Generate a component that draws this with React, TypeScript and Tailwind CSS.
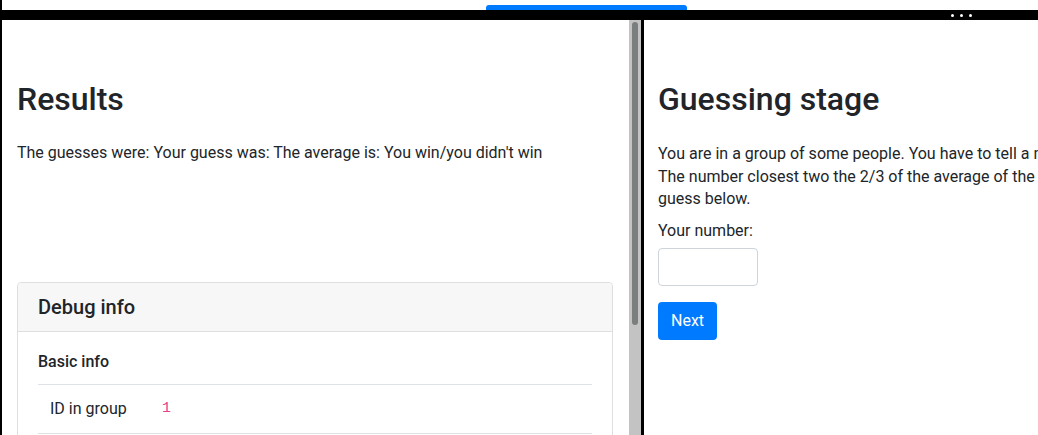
import React from 'react';

const font = "font-['Roboto','Liberation_Sans',sans-serif]";

const ResultsFrame: React.FC = () => (
    <div className="flex-1 flex min-w-0 border-l-2 border-black">
        <div className="flex-1 min-w-0 px-[15px] pt-[60px] overflow-hidden">
            <h1 className="text-[32px] leading-[38px] font-medium text-[#212529] mb-[24px]">Results</h1>
            <p className="text-[16px] leading-[22px] text-[#212529]">
                The guesses were: Your guess was: The average is: You win/you didn't win
            </p>

            {/* Debug card */}
            <div className="mt-[118px] border border-[#dfdfdf] rounded-[4px] w-[596px]">
                <div className="bg-[#f7f7f7] border-b border-[#dfdfdf] px-5 py-3 rounded-t-[4px]">
                    <h4 className="text-[20px] leading-[24px] font-medium text-[#212529]">Debug info</h4>
                </div>
                <div className="px-5 pt-5 pb-8">
                    <h5 className="text-[16px] leading-[20px] font-medium text-[#212529] mb-3">Basic info</h5>
                    <table className="w-full border-t border-[#dee2e6]">
                        <tbody>
                            <tr className="border-b border-[#dee2e6]">
                                <td className="px-3 py-3 text-[16px] leading-[24px] text-[#212529] w-[124px]">ID in group</td>
                                <td className="py-3 text-[15px] leading-[24px] text-[#e83e8c] font-['Liberation_Mono',monospace]">1</td>
                            </tr>
                        </tbody>
                    </table>
                </div>
            </div>
        </div>

        {/* Scrollbar */}
        <div className="w-[12px] bg-[#c3c3c3] flex justify-center pt-[2px]">
            <div className="w-[6px] h-[303px] rounded-full bg-[#7b7e7e]" />
        </div>
    </div>
);

const GuessFrame: React.FC = () => (
    <div className="w-[394px] shrink-0 overflow-hidden pl-[14px] pt-[60px]">
        <div className="w-[700px]">
            <h1 className="text-[32px] leading-[38px] font-medium text-[#212529] mb-[25px]">Guessing stage</h1>
            <p className="text-[16px] leading-[22.5px] text-[#212529] mb-[9px]">
                You are in a group of some people. You have to tell a number between 0 and 100.<br />
                The number closest two the 2/3 of the average of the guesses wins. Enter your<br />
                guess below.
            </p>
            <label className="block text-[16px] leading-[22px] text-[#212529] mb-[6px]">Your number:</label>
            <input
                type="number"
                className="block w-[100px] h-[38px] border border-[#ced4da] rounded-[4px] px-3 mb-[16px] outline-none"
            />
            <button className="bg-[#007bff] text-white text-[16px] leading-[24px] px-[13px] py-[7px] rounded-[4px]">
                Next
            </button>
        </div>
    </div>
);

const App: React.FC = () => {
    return (
        <div className={`${font} w-full h-[435px] bg-white flex flex-col overflow-hidden antialiased`}>
            {/* top strip with tab */}
            <div className="h-[10px] flex border-l-2 border-black">
                <div className="ml-[484px] mt-[5px] w-[201px] h-[5px] bg-[#007bff] rounded-t-[3px]" />
            </div>

            {/* toolbar */}
            <div className="h-[10px] bg-black flex items-center pl-[951px] gap-[6px]">
                <span className="w-[3px] h-[3px] rounded-full bg-white" />
                <span className="w-[3px] h-[3px] rounded-full bg-white" />
                <span className="w-[3px] h-[3px] rounded-full bg-white" />
            </div>

            <div className="flex-1 flex min-h-0">
                <ResultsFrame />
                <div className="w-[3px] bg-black shrink-0" />
                <GuessFrame />
            </div>
        </div>
    );
};

export default App;
